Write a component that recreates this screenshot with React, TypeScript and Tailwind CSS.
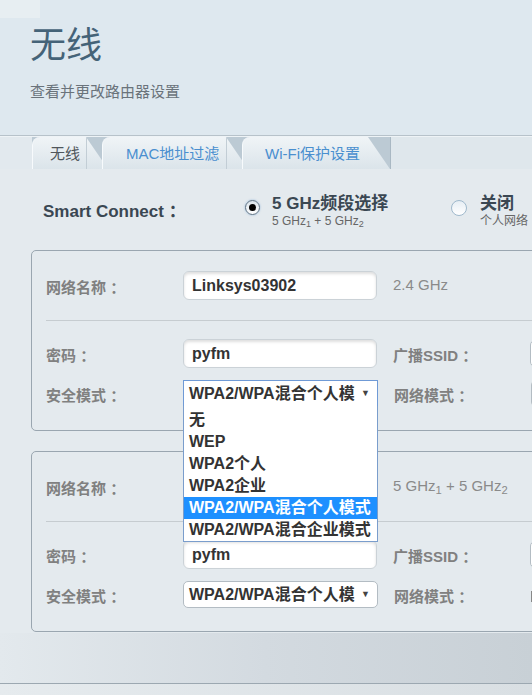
import type { ReactNode } from 'react';

function Tab({ label, className, textClassName }: { label: string; className: string; textClassName: string }) {
  return (
    <div
      className={`flex h-full items-stretch rounded-tl-[8px] border-l border-[#f7fafc] bg-gradient-to-b from-[#f0f4f7] to-[#dbe4ea] [clip-path:polygon(0_0,calc(100%_-_22px)_0,100%_100%,0_100%)] ${className}`}
    >
      <span className={`flex items-center text-[15px] leading-none ${textClassName}`}>{label}</span>
    </div>
  );
}

function Radio({ checked }: { checked?: boolean }) {
  if (checked) {
    return (
      <span className="flex h-[15px] w-[15px] shrink-0 items-center justify-center rounded-full border border-[#5f7384] bg-gradient-to-b from-[#d9e3ea] to-white shadow-[0_0_2px_rgba(80,140,200,0.6)]">
        <span className="h-[7px] w-[7px] rounded-full bg-black" />
      </span>
    );
  }
  return <span className="block h-[16px] w-[16px] shrink-0 rounded-full border border-[#9fb9cc] bg-gradient-to-b from-[#e6eef4] to-white" />;
}

function Label({ children }: { children: ReactNode }) {
  return <span className="w-[137px] shrink-0 pt-[6px] text-[15px] font-bold text-[#808080]">{children}</span>;
}

function TextBox({ value }: { value: string }) {
  return (
    <div className="flex h-[29px] w-[194px] shrink-0 items-center rounded-[6px] border border-[#cbd2d7] bg-white pl-[8px] text-[16px] font-bold text-[#333] shadow-[inset_0_2px_3px_rgba(0,0,0,0.13)]">
      {value}
    </div>
  );
}

function SelectBox({ focused, children }: { focused?: boolean; children?: ReactNode }) {
  return (
    <div
      className={
        focused
          ? 'relative flex h-[27px] w-[195px] shrink-0 items-center justify-between border border-[#6f9ad6] bg-white pl-[5px] pr-[7px]'
          : 'relative flex h-[27px] w-[195px] shrink-0 items-center justify-between rounded-[5px] border border-[#b3bcc3] bg-white pl-[5px] pr-[7px]'
      }
    >
      <span className="whitespace-nowrap text-[16px] font-bold text-[#333]">WPA2/WPA混合个人模</span>
      <span className="text-[9px] text-[#444]">▼</span>
      {children}
    </div>
  );
}

const securityModes = ['无', 'WEP', 'WPA2个人', 'WPA2企业', 'WPA2/WPA混合个人模式', 'WPA2/WPA混合企业模式'];

function ModeList() {
  return (
    <ul className="absolute left-[-1px] top-full z-10 w-[195px] border border-t-0 border-[#7a9dcc] bg-white pt-[3px]">
      {securityModes.map((m) => (
        <li
          key={m}
          className={
            m === 'WPA2/WPA混合个人模式'
              ? 'flex h-[22px] items-center whitespace-nowrap bg-[#1e90ff] pl-[5px] text-[16px] font-bold text-white'
              : 'flex h-[22px] items-center whitespace-nowrap pl-[5px] text-[16px] font-bold text-[#333]'
          }
        >
          {m}
        </li>
      ))}
    </ul>
  );
}

function EdgeBox() {
  return <div className="h-[27px] w-[40px] shrink-0 rounded-l-[5px] border border-[#b3bcc3] bg-white" />;
}

function NetworkPanel({ band, open }: { band: ReactNode; open?: boolean }) {
  return (
    <section className="w-[560px] rounded-[5px] border border-[#9aa6b0] pb-[23px] pl-[14px] pt-[20px]">
      <div className="flex h-[29px] items-center">
        <Label>网络名称 ：</Label>
        <TextBox value="Linksys03902" />
        <span className="ml-[16px] text-[15px] text-[#8a8a8a]">{band}</span>
      </div>
      <div className="mt-[20px] h-px bg-[#c6ccd0]" />
      <div className="mt-[18px] flex h-[29px] items-center">
        <Label>密码 ：</Label>
        <TextBox value="pyfm" />
        <span className="ml-[16px]" />
        <Label>广播SSID ：</Label>
        <EdgeBox />
      </div>
      <div className="mt-[12px] flex h-[27px] items-center">
        <Label>安全模式 ：</Label>
        <SelectBox focused={open}>{open && <ModeList />}</SelectBox>
        <span className="ml-[16px]" />
        <Label>网络模式 ：</Label>
        {open ? <EdgeBox /> : <span className="mt-[4px] h-[11px] w-[2px] bg-[#888]" />}
      </div>
    </section>
  );
}

export default function App() {
  return (
    <div className="flex h-[695px] w-[532px] flex-col overflow-hidden bg-[#e4eaee] font-['Liberation_Sans','Noto_Sans_CJK_SC',sans-serif]">
      <header className="relative h-[135px] shrink-0 bg-[#dee8ef] pl-[30px] pt-[22px]">
        <div className="absolute left-0 top-0 h-[18px] w-[40px] bg-[#e7eef2]" />
        <h1 className="text-[36px] leading-[48px] text-[#456378]">无线</h1>
        <p className="mt-[12px] text-[15px] leading-[20px] text-[#6a737b]">查看并更改路由器设置</p>
      </header>

      <div className="shrink-0 border-t border-[#b7c2ca] bg-[#eef3f6] pt-px">
        <nav className="flex h-[32px] items-stretch bg-[#bccad4]">
          <div className="w-[32px] bg-[#e2e9ee]" />
          <Tab label="无线" className="w-[76px] pl-[17px]" textClassName="border-r border-[#c2cdd5] pr-[6px] text-[#50565b]" />
          <Tab label="MAC地址过滤" className="-ml-[6px] w-[146px] pl-[23px]" textClassName="border-r border-[#c2cdd5] pr-[7px] text-[#4a8fcf]" />
          <Tab label="Wi-Fi保护设置" className="-ml-[6px] w-[148px] pl-[22px]" textClassName="text-[#4a8fcf]" />
          <div className="flex-1 border-l border-[#a9b8c3] bg-[#dfe7ec]" />
        </nav>
      </div>

      <div className="flex-1 pl-[31px]">
        <div className="mt-[25px] flex items-start">
          <span className="mt-[5px] w-[214px] pl-[12px] text-[17px] font-bold text-[#3a4752]">Smart Connect ：</span>
          <div className="flex w-[206px] items-start">
            <span className="mt-[6px]">
              <Radio checked />
            </span>
            <div className="ml-[12px]">
              <div className="text-[17px] font-bold leading-[20px] text-[#3a4752]">5 GHz频段选择</div>
              <div className="text-[12px] leading-[14px] text-[#666]">
                5 GHz<sub>1</sub> + 5 GHz<sub>2</sub>
              </div>
            </div>
          </div>
          <div className="flex items-start">
            <span className="mt-[6px]">
              <Radio />
            </span>
            <div className="ml-[13px] whitespace-nowrap">
              <div className="text-[17px] font-bold leading-[20px] text-[#3a4752]">关闭</div>
              <div className="text-[12px] leading-[14px] text-[#666]">个人网络</div>
            </div>
          </div>
        </div>

        <div className="relative z-10 mt-[22px]">
          <NetworkPanel band="2.4 GHz" open />
        </div>
        <div className="mt-[20px]">
          <NetworkPanel
            band={
              <>
                5 GHz<sub>1</sub> + 5 GHz<sub>2</sub>
              </>
            }
          />
        </div>
      </div>

      <div className="h-[50px] shrink-0 bg-gradient-to-r from-[#e3e9ed] via-[#d3dae0] to-[#c8d0d6]" />
      <div className="h-[12px] shrink-0 border-t border-[#9ca8b1] bg-gradient-to-r from-[#e6ebee] to-[#d9dfe3]" />
    </div>
  );
}
